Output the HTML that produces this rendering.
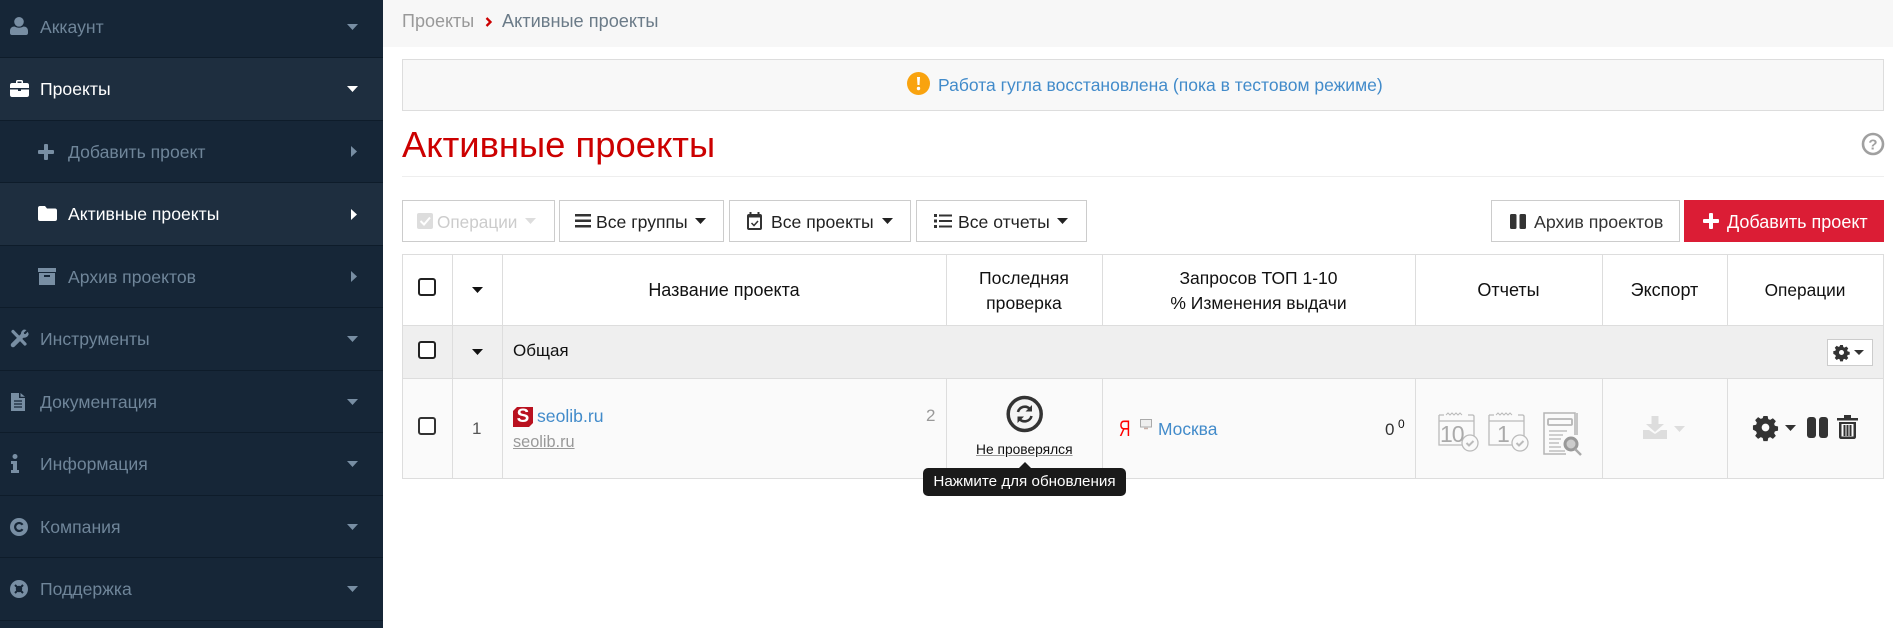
<!DOCTYPE html>
<html lang="ru"><head><meta charset="utf-8"><title>Активные проекты</title>
<style>
*{box-sizing:border-box}
html,body{margin:0;padding:0;width:1893px;height:628px;overflow:hidden;background:#fff;font-family:"Liberation Sans",sans-serif}
.a{position:absolute}
.t{position:absolute;white-space:nowrap;line-height:20px;height:20px;font-size:17.6px}
svg{position:absolute;display:block;overflow:visible}
.sb{left:0;top:0;width:383px;height:628px;background:#162637}
.row{position:absolute;left:0;width:383px;height:62.5px;border-bottom:1px solid #0e1c2a}
.on{background:#1e2e3f}
.side{color:#6f8599}
.w{color:#fff}
.btn{position:absolute;top:200px;height:42px;border:1px solid #ccc;background:#fff}
.v{position:absolute;width:1px;background:#ddd}
.h{position:absolute;height:1px;background:#ddd}
.cb{position:absolute;width:18px;height:18px;border:2px solid #222;border-radius:3px;background:#fff}
.th{color:#111}
</style></head><body>
<div class="a sb">
<div class="row" style="top:-5px"></div>
<div class="row on" style="top:58px"></div>
<div class="row" style="top:120.5px"></div>
<div class="row on" style="top:183px"></div>
<div class="row" style="top:245.5px"></div>
<div class="row" style="top:308px"></div>
<div class="row" style="top:370.5px"></div>
<div class="row" style="top:433px"></div>
<div class="row" style="top:495.5px"></div>
<div class="row" style="top:558px"></div>

<!-- icons -->
<svg style="left:10px;top:17px" width="18" height="18" viewBox="0 0 18 18" fill="#788ea3"><circle cx="9" cy="4.800" r="4.800"/><path d="M0 14c0-3 2-4.500 4.500-4.500 1.300.8 2.800 1.200 4.500 1.200s3.200-.4 4.500-1.200C16 9.500 18 11 18 14v2c0 1.200-.8 2-2 2H2c-1.200 0-2-.8-2-2z"/></svg>
<svg style="left:10px;top:80px" width="19" height="17" viewBox="0 0 19 17" fill="#fff"><path d="M6 3V1.500C6 .7 6.600 0 7.500 0h4c.9 0 1.500.7 1.500 1.500V3h4c1 0 2 .8 2 2v3H0V5c0-1.200 1-2 2-2zm1.500 0h4V1.500h-4zM0 9.500h8V11h3V9.500h8V15c0 1.200-1 2-2 2H2c-1 0-2-.8-2-2z"/></svg>
<svg style="left:38px;top:144px" width="16" height="16" viewBox="0 0 16 16" fill="#788ea3"><rect x="6" width="4" height="16" rx="1"/><rect y="6" width="16" height="4" rx="1"/></svg>
<svg style="left:38px;top:206px" width="19" height="15" viewBox="0 0 19 15" fill="#fff"><path d="M2 0h5l2 2.500h8c1.200 0 2 .8 2 2V13c0 1.200-.8 2-2 2H2c-1.200 0-2-.8-2-2V2C0 .8.800 0 2 0z"/></svg>
<svg style="left:38px;top:268px" width="18" height="17" viewBox="0 0 18 17" fill="#788ea3"><path d="M0 0h18v4H0zM1 5h16v12H1zM6 7v2h6V7z" fill-rule="evenodd"/></svg>
<svg style="left:10px;top:329px" width="19" height="19" viewBox="0 0 19 19" fill="none" stroke="#788ea3" stroke-linecap="round"><path d="M3 2.500 15 15" stroke-width="3.200"/><path d="M3 16 12 7" stroke-width="4.500"/><path d="M12.500 7.500c-1.500-2-1-5 1.500-6.200l1 .2-2 2 .5 2 2 .6 2-2 .4 1c-.8 2.500-3.500 3.700-5.400 2.400z" fill="#788ea3" stroke-width="1.500"/></svg>
<svg style="left:11px;top:393px" width="14" height="18" viewBox="0 0 14 18" fill="#788ea3"><path d="M0 0h8v5h6v13H0zM9.500 0 14 3.800H9.500z"/><path d="M3 8h8M3 11h8M3 14h8" stroke="#162637" stroke-width="1.300"/></svg>
<svg style="left:11px;top:454px" width="8" height="19" viewBox="0 0 8 19" fill="#788ea3"><circle cx="4" cy="2.500" r="2.500"/><path d="M0 7h6v9h2v3H0v-3h2v-6H0z"/></svg>
<svg style="left:10px;top:518px" width="18" height="18" viewBox="0 0 18 18"><circle cx="9" cy="9" r="9" fill="#788ea3"/><path d="M12.500 6.800A4 4 0 1 0 12.500 11.200" fill="none" stroke="#162637" stroke-width="2.200"/></svg>
<svg style="left:10px;top:580px" width="18" height="18" viewBox="0 0 18 18"><circle cx="9" cy="9" r="9" fill="#788ea3"/><circle cx="9" cy="9" r="3.200" fill="#162637"/><path d="M5 5 7 7M13 5 11 7M5 13 7 11M13 13 11 11" stroke="#162637" stroke-width="2"/></svg>

<!-- text -->
<span class="t side" style="left:40px;top:17px">Аккаунт</span>
<span class="t w" style="left:40px;top:79px">Проекты</span>
<span class="t side" style="left:68px;top:142px">Добавить проект</span>
<span class="t w" style="left:68px;top:204px">Активные проекты</span>
<span class="t side" style="left:68px;top:267px">Архив проектов</span>
<span class="t side" style="left:40px;top:329px">Инструменты</span>
<span class="t side" style="left:40px;top:392px">Документация</span>
<span class="t side" style="left:40px;top:454px">Информация</span>
<span class="t side" style="left:40px;top:517px">Компания</span>
<span class="t side" style="left:40px;top:579px">Поддержка</span>

<!-- carets -->
<svg style="left:347px;top:24px" width="11" height="6" fill="#788ea3"><path d="M0 0h11L5.500 6z"/></svg>
<svg style="left:347px;top:86px" width="11" height="6" fill="#fff"><path d="M0 0h11L5.500 6z"/></svg>
<svg style="left:351px;top:146px" width="6" height="11" fill="#788ea3"><path d="M0 0v11l6-5.500z"/></svg>
<svg style="left:351px;top:209px" width="6" height="11" fill="#fff"><path d="M0 0v11l6-5.500z"/></svg>
<svg style="left:351px;top:271px" width="6" height="11" fill="#788ea3"><path d="M0 0v11l6-5.500z"/></svg>
<svg style="left:347px;top:336px" width="11" height="6" fill="#788ea3"><path d="M0 0h11L5.500 6z"/></svg>
<svg style="left:347px;top:399px" width="11" height="6" fill="#788ea3"><path d="M0 0h11L5.500 6z"/></svg>
<svg style="left:347px;top:461px" width="11" height="6" fill="#788ea3"><path d="M0 0h11L5.500 6z"/></svg>
<svg style="left:347px;top:524px" width="11" height="6" fill="#788ea3"><path d="M0 0h11L5.500 6z"/></svg>
<svg style="left:347px;top:586px" width="11" height="6" fill="#788ea3"><path d="M0 0h11L5.500 6z"/></svg>
</div>

<!-- breadcrumb -->
<div class="a" style="left:383px;top:0;width:1510px;height:47px;background:#f7f7f7"></div>
<span class="t" style="left:402px;top:11px;color:#999;font-size:18px">Проекты</span>
<svg style="left:485px;top:17px" width="7" height="10"><path d="M1.500 1 5.500 5 1.500 9" fill="none" stroke="#c00" stroke-width="2.300"/></svg>
<span class="t" style="left:502px;top:11px;color:#6b7b88;font-size:18.200px">Активные проекты</span>

<!-- notice -->
<div class="a" style="left:402px;top:59px;width:1482px;height:52px;background:#f8f8f8;border:1px solid #ddd"></div>
<svg style="left:907px;top:72px" width="23" height="23"><circle cx="11.500" cy="11.500" r="11.500" fill="#f9a30f"/><path d="M10 5h3l-.5 8h-2z" fill="#fff"/><circle cx="11.500" cy="16.500" r="1.700" fill="#fff"/></svg>
<span class="t" style="left:938px;top:75px;color:#428bca;font-size:17.500px">Работа гугла восстановлена (пока в тестовом режиме)</span>

<!-- title -->
<span class="t" style="left:402px;top:125px;height:40px;line-height:40px;font-size:36.400px;color:#c00">Активные проекты</span>
<svg style="left:1862px;top:133px" width="22" height="22"><circle cx="11" cy="11" r="10" fill="none" stroke="#a0a0a0" stroke-width="2.600"/><text x="11" y="16.500" text-anchor="middle" font-family="Liberation Sans" font-weight="700" font-size="15" fill="#a0a0a0">?</text></svg>
<div class="a" style="left:402px;top:176px;width:1482px;height:1px;background:#eee"></div>

<!-- buttons -->
<div class="btn" style="left:402px;width:153px"></div>
<svg style="left:417px;top:213px" width="16" height="16"><rect width="16" height="16" rx="2" fill="#ddd"/><path d="M3.500 8 7 11.500 13 4.500" fill="none" stroke="#fff" stroke-width="2"/></svg>
<span class="t" style="left:437px;top:212px;color:#ccc;font-size:17.200px">Операции</span>
<svg style="left:525px;top:218px" width="11" height="6" fill="#ddd"><path d="M0 0h11L5.500 6z"/></svg>

<div class="btn" style="left:559px;width:165px"></div>
<svg style="left:575px;top:214px" width="16" height="14" fill="#333"><path d="M0 0h16v2.500H0zM0 5.500h16V8H0zM0 11h16v2.500H0z"/></svg>
<span class="t" style="left:596px;top:212px;color:#222">Все группы</span>
<svg style="left:695px;top:218px" width="11" height="6" fill="#222"><path d="M0 0h11L5.500 6z"/></svg>

<div class="btn" style="left:729px;width:182px"></div>
<svg style="left:747px;top:212px" width="15" height="18"><path d="M3.500 0v3M11.500 0v3" stroke="#333" stroke-width="2"/><rect x="1" y="3" width="13" height="14" rx="1" fill="none" stroke="#333" stroke-width="2"/><rect x="1" y="2.500" width="13" height="3" fill="#333"/><path d="M4.500 11 7 13.500 11 9" fill="none" stroke="#333" stroke-width="1.500"/></svg>
<span class="t" style="left:771px;top:212px;color:#222">Все проекты</span>
<svg style="left:882px;top:218px" width="11" height="6" fill="#222"><path d="M0 0h11L5.500 6z"/></svg>

<div class="btn" style="left:916px;width:171px"></div>
<svg style="left:934px;top:214px" width="18" height="14" fill="#333"><path d="M0 0h3v3H0zM5 .5h13v2H5zM0 5.500h3v3H0zM5 6h13v2H5zM0 11h3v3H0zM5 11.500h13v2H5z"/></svg>
<span class="t" style="left:958px;top:212px;color:#222">Все отчеты</span>
<svg style="left:1057px;top:218px" width="11" height="6" fill="#222"><path d="M0 0h11L5.500 6z"/></svg>

<div class="btn" style="left:1491px;width:189px"></div>
<svg style="left:1510px;top:214px" width="16" height="15" fill="#333"><rect width="6.500" height="15" rx="1.500"/><rect x="9.500" width="6.500" height="15" rx="1.500"/></svg>
<span class="t" style="left:1534px;top:212px;color:#333;font-size:17.800px">Архив проектов</span>
<div class="a" style="left:1684px;top:200px;width:200px;height:42px;background:#db1d35"></div>
<svg style="left:1703px;top:213px" width="16" height="16" fill="#fff"><rect x="6" width="4" height="16" rx="1"/><rect y="6" width="16" height="4" rx="1"/></svg>
<span class="t" style="left:1727px;top:212px;color:#fff;font-size:18px">Добавить проект</span>

<!-- table -->
<div class="a" style="left:402px;top:325px;width:1482px;height:53px;background:#efefef"></div>
<div class="a" style="left:402px;top:378px;width:1482px;height:100px;background:#fafafa"></div>
<div class="h" style="left:402px;top:254px;width:1482px"></div>
<div class="h" style="left:402px;top:325px;width:1482px"></div>
<div class="h" style="left:402px;top:378px;width:1482px"></div>
<div class="h" style="left:402px;top:478px;width:1482px"></div>
<div class="v" style="left:402px;top:254px;height:225px"></div>
<div class="v" style="left:452px;top:254px;height:225px"></div>
<div class="v" style="left:502px;top:254px;height:225px"></div>
<div class="v" style="left:946px;top:254px;height:71px"></div>
<div class="v" style="left:946px;top:378px;height:100px"></div>
<div class="v" style="left:1102px;top:254px;height:71px"></div>
<div class="v" style="left:1102px;top:378px;height:100px"></div>
<div class="v" style="left:1415px;top:254px;height:71px"></div>
<div class="v" style="left:1415px;top:378px;height:100px"></div>
<div class="v" style="left:1602px;top:254px;height:71px"></div>
<div class="v" style="left:1602px;top:378px;height:100px"></div>
<div class="v" style="left:1727px;top:254px;height:71px"></div>
<div class="v" style="left:1727px;top:378px;height:100px"></div>
<div class="v" style="left:1883px;top:254px;height:225px"></div>

<div class="cb" style="left:418px;top:278px"></div>
<div class="cb" style="left:418px;top:341px"></div>
<div class="cb" style="left:418px;top:417px;border-color:#333"></div>
<svg style="left:472px;top:287px" width="11" height="6" fill="#111"><path d="M0 0h11L5.500 6z"/></svg>
<svg style="left:472px;top:349px" width="11" height="6" fill="#111"><path d="M0 0h11L5.500 6z"/></svg>

<span class="t th" style="left:502px;width:444px;text-align:center;top:280px;font-size:18px">Название проекта</span>
<span class="t th" style="left:946px;width:156px;text-align:center;top:268px">Последняя</span>
<span class="t th" style="left:946px;width:156px;text-align:center;top:293px">проверка</span>
<span class="t th" style="left:1102px;width:313px;text-align:center;top:268px;font-size:17.500px">Запросов ТОП 1-10</span>
<span class="t th" style="left:1102px;width:313px;text-align:center;top:293px;font-size:17.500px">% Изменения выдачи</span>
<span class="t th" style="left:1415px;width:187px;text-align:center;top:280px;font-size:18px">Отчеты</span>
<span class="t th" style="left:1602px;width:125px;text-align:center;top:280px;font-size:18px">Экспорт</span>
<span class="t th" style="left:1727px;width:156px;text-align:center;top:280px;font-size:17.300px">Операции</span>

<span class="t" style="left:513px;top:341px;color:#111;font-size:17px">Общая</span>
<div class="a" style="left:1827px;top:339px;width:46px;height:27px;background:#fff;border:1px solid #ccc"></div>
<svg style="left:1834px;top:345px" width="15" height="15" viewBox="0 0 24 24" fill="#333"><path fill-rule="evenodd" d="M9.800 0h4.400l.7 3.300 2 .8 2.800-1.800 3.100 3.100-1.800 2.800.8 2 3.300.7v4.400l-3.300.7-.8 2 1.800 2.800-3.100 3.100-2.800-1.800-2 .8-.7 3.300H9.800l-.7-3.300-2-.8-2.800 1.800-3.100-3.100 1.800-2.800-.8-2L-1.100 14.200V9.800l3.300-.7.800-2-1.800-2.800 3.100-3.100 2.800 1.800 2-.8zM12 8a4 4 0 1 0 0 8 4 4 0 0 0 0-8z"/></svg>
<svg style="left:1854px;top:350px" width="10" height="5" fill="#333"><path d="M0 0h10L5 5z"/></svg>

<span class="t" style="left:472px;top:419px;color:#555;font-size:17px">1</span>
<svg style="left:513px;top:407px" width="20" height="20"><path d="M4 0H20V16L16 20H0V4z" fill="#b9111f"/></svg>
<span class="t" style="left:513px;width:20px;top:407px;text-align:center;color:#fff;font-weight:700;font-size:19px">S</span>
<span class="t" style="left:537px;top:406px;color:#428bca">seolib.ru</span>
<span class="t" style="left:513px;top:432px;color:#999;font-size:16.300px;text-decoration:underline">seolib.ru</span>
<span class="t" style="left:926px;top:406px;color:#999;font-size:17px">2</span>

<!-- check -->
<svg style="left:1006px;top:396px" width="38" height="37"><circle cx="18.700" cy="18" r="16.500" fill="#f4f4f4" stroke="#333" stroke-width="3.500"/><path d="M12 16a7 7 0 0 1 12-3M25.500 20a7 7 0 0 1-12 3" fill="none" stroke="#333" stroke-width="2.600"/><path d="M26 9v6.500h-6.500zM11.500 27v-6.500H18z" fill="#333"/></svg>
<span class="t" style="left:976px;top:440px;color:#111;font-size:13.800px;text-decoration:underline;text-decoration-color:#999">Не проверялся</span>
<div class="a" style="left:923px;top:468px;width:203px;height:28px;background:#1a1a1a;border-radius:5px"></div>
<svg style="left:1018px;top:462px" width="14" height="7" fill="#1a1a1a"><path d="M0 7 7 0l7 7z"/></svg>
<span class="t" style="left:923px;width:203px;text-align:center;top:472px;color:#fff;font-size:15.200px">Нажмите для обновления</span>

<span class="t" style="left:1119px;top:419px;color:#f00;font-size:22px;transform:scaleX(.72);transform-origin:0 50%">Я</span>
<svg style="left:1140px;top:419px" width="12" height="11"><rect x=".5" y=".5" width="11" height="7.500" fill="#eee" stroke="#aaa"/><path d="M4 9.500h4" stroke="#c8b0a8" stroke-width="1.500"/></svg>
<span class="t" style="left:1158px;top:419px;color:#428bca;font-size:17.400px">Москва</span>
<span class="t" style="left:1385px;top:420px;color:#333;font-size:17px">0</span>
<span class="t" style="left:1398px;top:414px;color:#111;font-size:12px">0</span>

<!-- reports -->
<svg style="left:1438px;top:412px" width="42" height="40" fill="none" stroke="#bbb" stroke-width="1.300"><path d="M1 3h5M30 3h5l1 1v20M1 3v30h26M1 9h35"/><path d="M8 3l2-2 2 2 2-2 2 2 2-2 2 2 2-2 2 2" stroke-width="1"/><circle cx="32" cy="31" r="8" fill="#fafafa"/><path d="M28.500 31l2.500 2.500 4.500-4.500" stroke-width="2"/><text x="2" y="30" font-family="Liberation Sans" font-size="23" letter-spacing="-1" fill="#aaa" stroke="none">10</text></svg>
<svg style="left:1488px;top:412px" width="42" height="40" fill="none" stroke="#bbb" stroke-width="1.300"><path d="M1 3h5M30 3h5l1 1v20M1 3v30h26M1 9h35"/><path d="M8 3l2-2 2 2 2-2 2 2 2-2 2 2 2-2 2 2" stroke-width="1"/><circle cx="32" cy="31" r="8" fill="#fafafa"/><path d="M28.500 31l2.500 2.500 4.500-4.500" stroke-width="2"/><text x="9" y="30" font-family="Liberation Sans" font-size="23" fill="#aaa" stroke="none">1</text></svg>
<svg style="left:1542px;top:412px" width="41" height="44" fill="none" stroke="#b5b5b5" stroke-width="1.500"><path d="M24 42H2V1h31v22M35 1v22" /><rect x="6" y="7" width="24" height="6" rx="1" stroke-width="1.800"/><path d="M7 19h18M7 23h14M7 27h12M7 31h10M7 35h12M7 39h16" stroke-width="1.300"/><circle cx="29" cy="32" r="6" fill="#ccc" stroke="#999" stroke-width="3"/><path d="M33 37l6 6" stroke="#aaa" stroke-width="2.500"/></svg>

<svg style="left:1643px;top:416px" width="24" height="23" fill="#ddd"><path d="M8.500 0h7v8H21L12 16 3 8h5.500z"/><path d="M0 14h6l6 4 6-4h6v9H0z"/></svg>
<svg style="left:1674px;top:426px" width="11" height="6" fill="#ddd"><path d="M0 0h11L5.500 6z"/></svg>

<svg style="left:1754px;top:416px" width="23" height="23" viewBox="0 0 24 24" fill="#333"><path fill-rule="evenodd" d="M9.800 0h4.400l.7 3.300 2 .8 2.800-1.800 3.100 3.100-1.800 2.800.8 2 3.300.7v4.400l-3.300.7-.8 2 1.800 2.800-3.100 3.100-2.800-1.800-2 .8-.7 3.300H9.800l-.7-3.300-2-.8-2.800 1.800-3.100-3.100 1.800-2.800-.8-2L-1.100 14.200V9.800l3.300-.7.800-2-1.800-2.800 3.100-3.100 2.800 1.800 2-.8zM12 8a4 4 0 1 0 0 8 4 4 0 0 0 0-8z"/></svg>
<svg style="left:1785px;top:425px" width="11" height="6" fill="#333"><path d="M0 0h11L5.500 6z"/></svg>
<svg style="left:1807px;top:417px" width="21" height="21" fill="#333"><rect width="9" height="21" rx="3"/><rect x="12" width="9" height="21" rx="3"/></svg>
<svg style="left:1837px;top:415px" width="21" height="24" fill="#333"><path d="M0 3h7V0h7v3h7v2.500H0z"/><path fill-rule="evenodd" d="M2 7h17v15c0 1-.8 2-2 2H4c-1.200 0-2-1-2-2zM4.500 9v12.500h12V9z"/><path d="M6.500 10h2v11h-2zM9.500 10h2v11h-2zM12.500 10h2v11h-2z"/></svg>
</body></html>
